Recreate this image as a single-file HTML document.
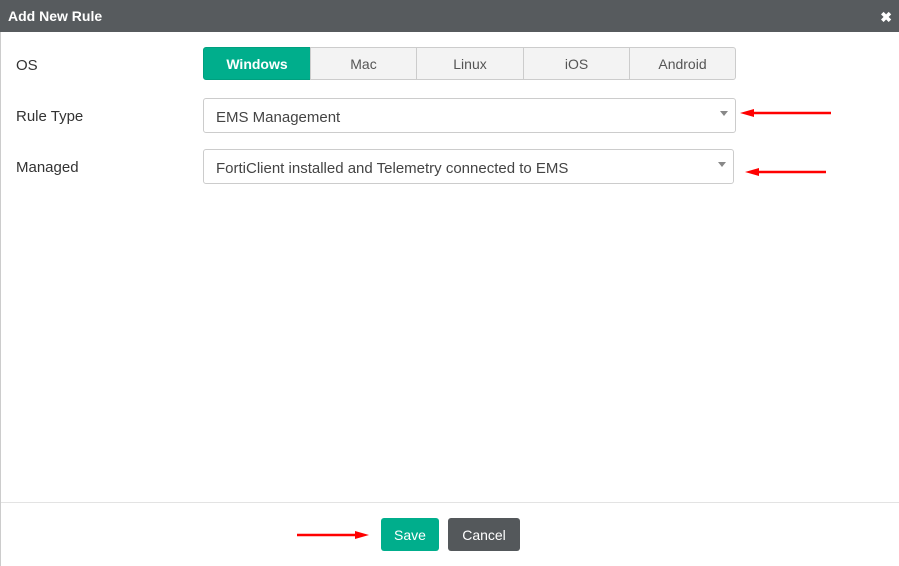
<!DOCTYPE html>
<html><head><style>
body{margin:0;width:899px;height:566px;background:#fff;font-family:"Liberation Sans",sans-serif;position:relative;overflow:hidden}
.hdr{position:absolute;left:0;top:0;width:899px;height:32px;background:#575b5e;color:#fff;font-weight:bold;font-size:14px;line-height:32px;padding-left:8px;box-sizing:border-box}
.x{position:absolute;right:7px;top:1px;font-size:14px}
.lb{position:absolute;left:16px;font-size:15px;color:#333}
.seg{position:absolute;top:47px;height:33px;box-sizing:border-box;border:1px solid #ccc;background:#f3f3f3;color:#555;font-size:14px;text-align:center;line-height:33px}
.sel{position:absolute;left:203px;height:35px;box-sizing:border-box;border:1px solid #ccc;border-radius:3px;font-size:15px;color:#444;line-height:37px;padding-left:12px}
.car{position:absolute;right:7px;top:12px;width:0;height:0;border-left:4px solid transparent;border-right:4px solid transparent;border-top:5px solid #888}
.btn{position:absolute;top:518px;height:33px;border-radius:3px;color:#fff;font-size:14px;text-align:center;line-height:35px}
.ar{position:absolute}
</style></head><body>
<div style="position:absolute;left:0;top:32px;width:1px;height:534px;background:#ccc"></div>
<div class="hdr">Add New Rule<span class="x">✖</span></div>
<div class="lb" style="top:57px">OS</div>
<div class="lb" style="top:108px">Rule Type</div>
<div class="lb" style="top:159px">Managed</div>
<div class="seg" style="left:203px;width:108px;background:#00ae8c;border-color:#00a07f;color:#fff;font-weight:bold;border-radius:3px 0 0 3px">Windows</div>
<div class="seg" style="left:310px;width:107px">Mac</div>
<div class="seg" style="left:416px;width:108px">Linux</div>
<div class="seg" style="left:523px;width:107px">iOS</div>
<div class="seg" style="left:629px;width:107px;border-radius:0 3px 3px 0">Android</div>
<div class="sel" style="top:98px;width:533px">EMS Management<div class="car"></div></div>
<div class="sel" style="top:149px;width:531px">FortiClient installed and Telemetry connected to EMS<div class="car"></div></div>
<svg class="ar" style="left:738px;top:106px" width="96" height="14"><line x1="10" y1="7" x2="93" y2="7" stroke="#f00" stroke-width="2.5"/><polygon points="2,7 16,3 16,11" fill="#f00"/></svg>
<svg class="ar" style="left:743px;top:165px" width="86" height="14"><line x1="10" y1="7" x2="83" y2="7" stroke="#f00" stroke-width="2.5"/><polygon points="2,7 16,3 16,11" fill="#f00"/></svg>
<svg class="ar" style="left:295px;top:528px" width="78" height="14"><line x1="2" y1="7" x2="64" y2="7" stroke="#f00" stroke-width="2.5"/><polygon points="74,7 60,3 60,11" fill="#f00"/></svg>
<div style="position:absolute;left:1px;top:502px;width:898px;height:1px;background:#e3e3e3"></div>
<div class="btn" style="left:381px;width:58px;background:#00ae8c">Save</div>
<div class="btn" style="left:448px;width:72px;background:#54585b">Cancel</div>
</body></html>
